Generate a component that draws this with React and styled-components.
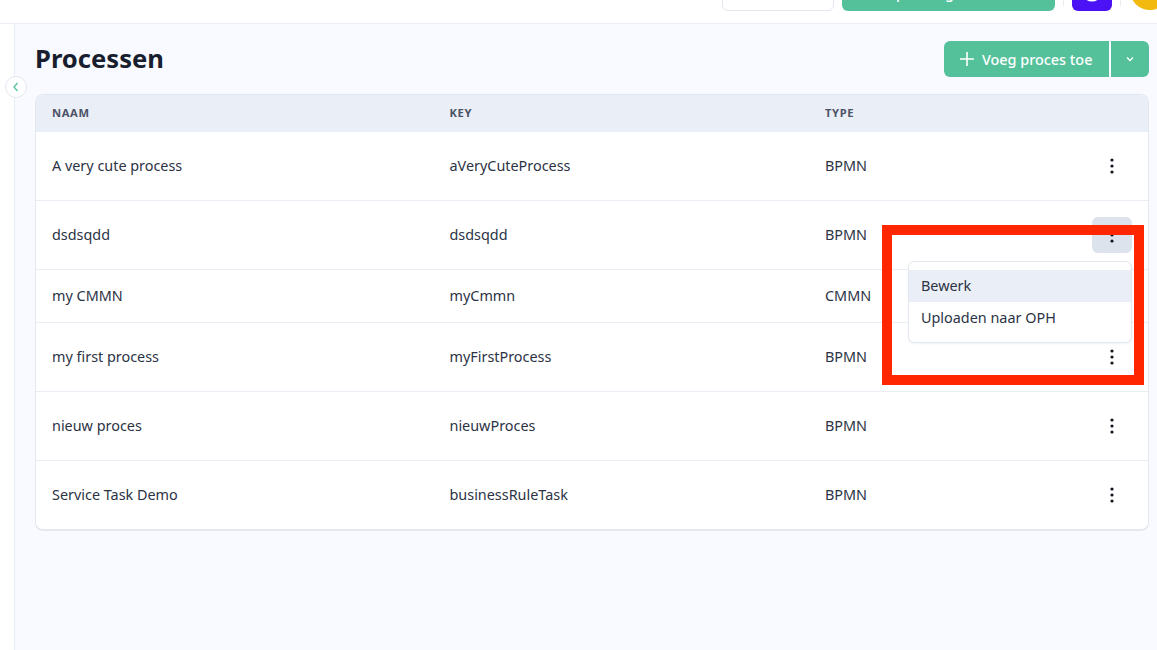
import React from "react";
import styled, { createGlobalStyle } from "styled-components";

const Global = createGlobalStyle`
  html, body { margin: 0; padding: 0; height: 100%; overflow: hidden; }
  body { font-family: "Noto Sans", "Open Sans", sans-serif; color: #2c3345; background: #f9faff; }
  #root { height: 100%; }
`;
const Page = styled.div`position: relative; display: flex; flex-direction: column; width: 1157px; height: 650px; overflow: hidden;`;
const TopBar = styled.header`
  display: flex; align-items: flex-end; flex: 0 0 24px; height: 24px; box-sizing: border-box;
  padding: 0 0 12px 722px; background: #fff; border-bottom: 1px solid #e9edf4;
`;
const TopClip = styled.div`display: flex; align-items: flex-end; height: 11px;`;
const GhostButton = styled.div`width: 112px; height: 40px; flex: none; box-sizing: border-box; background: #fff; border: 1px solid #e2e7f0; border-radius: 6px; margin-right: 8px;`;
const TopGreen = styled.div`
  width: 213px; height: 36px; flex: none; box-sizing: border-box; padding-top: 2px; background: #55c19b; border-radius: 6px; color: #fff; font-size: 14.4px; font-weight: 500; line-height: 20px;
  display: flex; justify-content: center; align-items: center; margin-right: 8px; white-space: nowrap;
`;
const Divider = styled.div`width: 1px; height: 30px; flex: none; background: #e9edf4; margin-bottom: 5px;`;
const PurpleButton = styled.div`width: 40px; height: 40px; flex: none; background: #4a12f5; border-radius: 6px; margin: 0 8px 0 8px; display: flex; align-items: center; justify-content: center; color: #fff;`;
const Avatar = styled.div`width: 40px; height: 40px; flex: none; border-radius: 50%; background: #f2b90f; margin: 0 0 1px 9px;`;
const Body = styled.div`display: flex; flex: 1; min-height: 0;`;
const Rail = styled.aside`position: relative; flex: 0 0 15px; box-sizing: border-box; background: #fff; border-right: 1px solid #e9edf4;`;
const Collapse = styled.button`
  position: absolute; left: 5px; top: 52px; width: 22px; height: 22px; padding: 0; border-radius: 50%;
  border: 1px solid #e2e7f0; background: #fff; display: flex; align-items: center; justify-content: center; box-sizing: border-box; color: #55c19b;
`;
const Main = styled.main`flex: 1; min-width: 0; padding: 17px 8px 0 20px;`;
const TitleRow = styled.div`display: flex; justify-content: space-between; align-items: center; height: 36px; margin-bottom: 17px;`;
const Title = styled.h1`margin: 0; font-size: 25.6px; line-height: 36px; font-weight: 700; color: #181e2e;`;
const Split = styled.div`display: flex; gap: 2px;`;
const AddButton = styled.button`
  display: flex; align-items: center; gap: 7px; height: 36px; width: 165px; padding: 0 0 0 15px; box-sizing: border-box; border: 0;
  background: #55c19b; color: #fff; font: 500 14.4px/20px "Noto Sans", sans-serif; border-radius: 6px 0 0 6px;
`;
const AddLabel = styled.span`padding-top: 2px;`;
const ChevronButton = styled.button`
  display: flex; align-items: center; justify-content: center; height: 36px; width: 38px; padding: 0; border: 0; background: #55c19b; color: #fff; border-radius: 0 6px 6px 0;
`;
const Card = styled.section`background: #fff; border: 1px solid #e2e7f0; border-bottom-width: 2px; border-radius: 8px; overflow: hidden; width: 1114px; box-sizing: border-box;`;
const cols = `grid-template-columns: 397.5px 375.5px 1fr 40px; padding: 0 16px;`;
const HeadRow = styled.div`
  display: grid; ${cols} padding-bottom: 2px; box-sizing: border-box; align-items: center; height: 37px; background: #eaeef6;
  font-size: 11.2px; font-weight: 700; letter-spacing: .6px; color: #4a5367;
`;
const Row = styled.div`
  display: grid; ${cols} align-items: center; height: ${p => p.$h}px; font-size: 14.4px; line-height: 20px; color: #2c3345;
  & + & { border-top: 1px solid #e9edf4; }
`;
const Dots = styled.button`
  display: flex; align-items: center; justify-content: center; width: 40px; height: 36px; padding: 0; border: 0; border-radius: 6px;
  background: ${p => (p.$active ? "#dde3ed" : "transparent")}; color: #10141f;
`;
const Menu = styled.div`
  position: absolute; left: 908px; top: 261px; width: 224px; box-sizing: border-box; padding: 8px 0; background: #fff;
  border: 1px solid #e2e7f0; border-radius: 6px; box-shadow: 0 1px 2px rgba(40,50,80,.06);
`;
const MenuItem = styled.div`
  height: 32px; box-sizing: border-box; padding: 0 12px 2px; display: flex; align-items: center; font-size: 14.4px; color: #2c3345;
  background: ${p => (p.$active ? "#eaeef6" : "transparent")};
`;
const Annotation = styled.div`position: absolute; left: 882px; top: 225px; width: 262px; height: 160px; box-sizing: border-box; border: 10px solid #ff2600; pointer-events: none;`;

const DotsIcon = () => (
  <svg width="4" height="16" viewBox="0 0 4 16" fill="currentColor" aria-hidden="true">
    <circle cx="2" cy="2" r="1.6" /><circle cx="2" cy="8" r="1.6" /><circle cx="2" cy="14" r="1.6" />
  </svg>
);

const rows = [
  ["A very cute process", "aVeryCuteProcess", "BPMN", 68],
  ["dsdsqdd", "dsdsqdd", "BPMN", 68, true],
  ["my CMMN", "myCmmn", "CMMN", 52],
  ["my first process", "myFirstProcess", "BPMN", 68],
  ["nieuw proces", "nieuwProces", "BPMN", 68],
  ["Service Task Demo", "businessRuleTask", "BPMN", 68],
];

export default function App() {
  return (
    <Page>
      <Global />
      <TopBar>
        <TopClip>
          <GhostButton />
          <TopGreen>Opslaan gebruiker</TopGreen>
          <Divider />
          <PurpleButton>
            <svg width="24" height="24" viewBox="0 0 24 24" fill="none" stroke="currentColor" strokeWidth="2"><circle cx="12" cy="12" r="9.5" /></svg>
          </PurpleButton>
          <Divider />
          <Avatar />
        </TopClip>
      </TopBar>
      <Body>
        <Rail>
          <Collapse aria-label="Inklappen">
            <svg width="8" height="10" viewBox="0 0 8 10" fill="none" stroke="currentColor" strokeWidth="1.3"><path d="M5.5 1 L2 5 L5.5 9" /></svg>
          </Collapse>
        </Rail>
        <Main>
          <TitleRow>
            <Title>Processen</Title>
            <Split>
              <AddButton>
                <svg width="16" height="16" viewBox="0 0 16 16" stroke="currentColor" strokeWidth="1.6"><path d="M8 1v14M1 8h14" /></svg>
                <AddLabel>Voeg proces toe</AddLabel>
              </AddButton>
              <ChevronButton aria-label="Meer">
                <svg width="10" height="6" viewBox="0 0 10 6" fill="none" stroke="currentColor" strokeWidth="1.3"><path d="M2 1.5 L5 4.5 L8 1.5" /></svg>
              </ChevronButton>
            </Split>
          </TitleRow>
          <Card>
            <HeadRow><span>NAAM</span><span>KEY</span><span>TYPE</span><span /></HeadRow>
            {rows.map(([name, key, type, h, active]) => (
              <Row key={key} $h={h}>
                <span>{name}</span><span>{key}</span><span>{type}</span>
                {h > 60 ? <Dots $active={active}><DotsIcon /></Dots> : <span />}
              </Row>
            ))}
          </Card>
        </Main>
      </Body>
      <Annotation />
      <Menu>
        <MenuItem $active>Bewerk</MenuItem>
        <MenuItem>Uploaden naar OPH</MenuItem>
      </Menu>
    </Page>
  );
}
